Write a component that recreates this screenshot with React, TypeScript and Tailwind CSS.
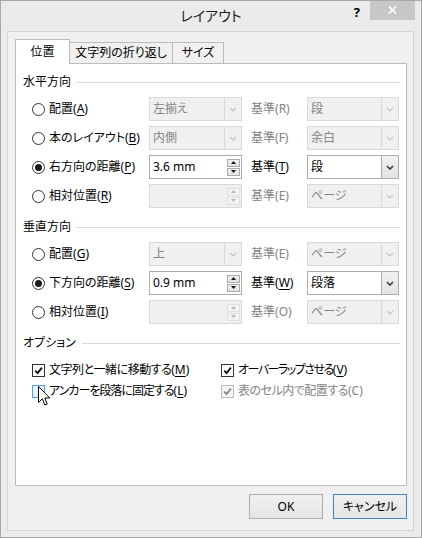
import React from "react"

type Field = { kind: "combo" | "spin"; v: string; on: boolean }
type Row = { label: string; k: string; checked?: boolean; field: Field; base: string; baseOn: boolean; right: string; rightOn: boolean }

const horizontal: Row[] = [
  { label: "配置", k: "A", field: { kind: "combo", v: "左揃え", on: false }, base: "R", baseOn: false, right: "段", rightOn: false },
  { label: "本のレイアウト", k: "B", field: { kind: "combo", v: "内側", on: false }, base: "F", baseOn: false, right: "余白", rightOn: false },
  { label: "右方向の距離", k: "P", checked: true, field: { kind: "spin", v: "3.6 mm", on: true }, base: "T", baseOn: true, right: "段", rightOn: true },
  { label: "相対位置", k: "R", field: { kind: "spin", v: "", on: false }, base: "E", baseOn: false, right: "ページ", rightOn: false },
]

const vertical: Row[] = [
  { label: "配置", k: "G", field: { kind: "combo", v: "上", on: false }, base: "E", baseOn: false, right: "ページ", rightOn: false },
  { label: "下方向の距離", k: "S", checked: true, field: { kind: "spin", v: "0.9 mm", on: true }, base: "W", baseOn: true, right: "段落", rightOn: true },
  { label: "相対位置", k: "I", field: { kind: "spin", v: "", on: false }, base: "O", baseOn: false, right: "ページ", rightOn: false },
]

function Acc({ t, k, off, cls }: { t: string; k: string; off?: boolean; cls?: string }) {
  return (
    <span className="whitespace-nowrap">
      <span className={cls}>{t}</span>(<span className={off ? "" : "underline underline-offset-2"}>{k}</span>)
    </span>
  )
}

function Chevron({ on }: { on: boolean }) {
  return (
    <svg width="8" height="5" viewBox="0 0 8 5">
      <path d="M1 1 L4 4 L7 1" fill="none" stroke={on ? "#3c3c3c" : "#c4c4c4"} strokeWidth={on ? 1.6 : 1.1} />
    </svg>
  )
}

function Combo({ v, on, w }: { v: string; on: boolean; w: string }) {
  return (
    <div className={`${w} h-[24px] flex border ${on ? "border-[#abadb3] bg-white text-black" : "border-[#d9d9d9] bg-[#f0f0f0] text-[#838383]"}`}>
      <span className="flex-1 pl-[3px] flex items-center leading-[16px]">{v}</span>
      <span className={`w-[17px] flex items-center justify-center border-l ${on ? "border-[#acacac] bg-gradient-to-b from-[#f0f0f0] to-[#e3e3e3]" : "border-[#d9d9d9]"}`}>
        <Chevron on={on} />
      </span>
    </div>
  )
}

function SpinBtn({ up, on }: { up?: boolean; on: boolean }) {
  return (
    <span className={`w-[13px] h-[8px] flex items-center justify-center border ${on ? "border-[#acacac] bg-gradient-to-b from-[#f2f2f2] to-[#e2e2e2]" : "border-[#e0e0e0] bg-[#f4f4f4]"}`}>
      <svg width="5" height="3" viewBox="0 0 5 3">
        <path d={up ? "M0 3 L2.5 0 L5 3Z" : "M0 0 L2.5 3 L5 0Z"} fill={on ? "#111" : "#b8b8b8"} />
      </svg>
    </span>
  )
}

function Spin({ v, on }: { v: string; on: boolean }) {
  return (
    <div className={`w-[93px] h-[24px] flex items-center border ${on ? "border-[#abadb3] bg-white" : "border-[#d9d9d9] bg-[#f0f0f0]"}`}>
      <span className="flex-1 pl-[3px] leading-[16px]">{v}</span>
      <span className="flex flex-col gap-[1px] mr-[1px]">
        <SpinBtn up on={on} />
        <SpinBtn on={on} />
      </span>
    </div>
  )
}

function Radio({ checked }: { checked?: boolean }) {
  return (
    <span className="w-[13px] h-[13px] shrink-0 rounded-full border border-[#333] bg-white flex items-center justify-center">
      {checked && <span className="w-[7px] h-[7px] rounded-full bg-[#1a1a1a]" />}
    </span>
  )
}

function Check({ checked, off, hover }: { checked?: boolean; off?: boolean; hover?: boolean }) {
  const box = off ? "border-[#bcbcbc] bg-[#f4f4f4]" : hover ? "border-[#5b9bd5] bg-[#e8f2fc]" : "border-[#333] bg-white"
  return (
    <span className={`w-[13px] h-[13px] shrink-0 border flex items-center justify-center ${box}`}>
      {checked && (
        <svg width="9" height="9" viewBox="0 0 9 9">
          <path d="M1.2 4.6 L3.6 7.1 L7.9 1.6" fill="none" stroke={off ? "#8a8a8a" : "#111"} strokeWidth="1.8" />
        </svg>
      )}
    </span>
  )
}

function Section({ title }: { title: string }) {
  return (
    <div className="h-[14px] flex items-center">
      <span className="leading-[14px]">{title}</span>
      <span className="flex-1 h-px bg-[#dcdcdc] ml-[6px]" />
    </div>
  )
}

function Line({ r }: { r: Row }) {
  return (
    <div className="flex items-center h-[24px] pl-[9px]">
      <div className="w-[117px] flex items-center gap-[4px] leading-[16px]">
        <Radio checked={r.checked} />
        <Acc t={r.label} k={r.k} />
      </div>
      {r.field.kind === "combo" ? <Combo v={r.field.v} on={r.field.on} w="w-[93px]" /> : <Spin v={r.field.v} on={r.field.on} />}
      <div className={`w-[56px] ml-[9px] leading-[16px] ${r.baseOn ? "text-black" : "text-[#838383]"}`}>
        <Acc t="基準" k={r.base} off={!r.baseOn} />
      </div>
      <Combo v={r.right} on={r.rightOn} w="w-[92px]" />
    </div>
  )
}

export default function App() {
  return (
    <div className="relative w-[422px] h-[538px] overflow-hidden border border-[#a8a8a8] bg-[#ebebeb] flex flex-col text-[12px] text-black font-['Noto_Sans','Noto_Sans_CJK_JP',sans-serif] [font-feature-settings:'palt']">
      {/* title bar */}
      <div className="h-[30px] grid grid-cols-[1fr_auto_1fr]">
        <div />
        <div className="text-[14px] leading-[20px] pt-[5px] text-[#1e1e1e]">レイアウト</div>
        <div className="flex justify-end items-start pr-[6px]">
          <span className="mt-[4px] mr-[10px] text-[13px] font-bold leading-[14px]">?</span>
          <span className="w-[45px] h-[20px] -mt-px bg-[#c7c7c7] flex items-center justify-center">
            <svg width="9" height="8" viewBox="0 0 9 8">
              <path d="M1 0.5 L8 7.5 M8 0.5 L1 7.5" stroke="white" strokeWidth="1.6" />
            </svg>
          </span>
        </div>
      </div>

      {/* client area */}
      <div className="ml-[6px] w-[407px] h-[500px] border border-[#d5d5d5] bg-[#f0f0f0] flex flex-col">
        <div className="pt-[7px] pl-[7px] h-[31px] flex items-end">
          <div className="relative z-10 -mb-px w-[55px] h-[25px] bg-white border border-b-0 border-[#bcbcbc] flex items-center justify-center leading-[16px]">位置</div>
          <div className="-ml-px w-[104px] h-[21px] bg-[#f0f0f0] border border-b-0 border-[#bcbcbc] flex items-center justify-center leading-[16px]">文字列の折り返し</div>
          <div className="-ml-px w-[52px] h-[21px] bg-[#f0f0f0] border border-b-0 border-[#bcbcbc] flex items-center justify-center leading-[16px]">サイズ</div>
        </div>

        <div className="ml-[7px] w-[392px] h-[423px] bg-white border border-[#bcbcbc] pl-[7px] pr-[6px] pt-[11px] flex flex-col">
          <Section title="水平方向" />
          <div className="mt-[8px] flex flex-col gap-[5px]">
            {horizontal.map((r, i) => <Line key={i} r={r} />)}
          </div>

          <div className="mt-[12px]"><Section title="垂直方向" /></div>
          <div className="mt-[8px] flex flex-col gap-[5px]">
            {vertical.map((r, i) => <Line key={i} r={r} />)}
          </div>

          <div className="mt-[12px]"><Section title="オプション" /></div>
          <div className="mt-[10px] pl-[9px] flex flex-col gap-[1px] leading-[16px]">
            <div className="h-[20px] flex items-center">
              <div className="w-[189px] flex items-center gap-[4px]">
                <Check checked />
                <Acc t="文字列と一緒に移動する" k="M" cls="tracking-[-0.5px]" />
              </div>
              <div className="flex items-center gap-[4px]">
                <Check checked />
                <Acc t="オーバーラップさせる" k="V" cls="tracking-[-1.5px]" />
              </div>
            </div>
            <div className="h-[20px] flex items-center">
              <div className="w-[189px] flex items-center gap-[4px]">
                <Check hover />
                <Acc t="アンカーを段落に固定する" k="L" cls="tracking-[-1px]" />
              </div>
              <div className="flex items-center gap-[4px] text-[#838383]">
                <Check checked off />
                <Acc t="表のセル内で配置する" k="C" off cls="tracking-[-0.5px]" />
              </div>
            </div>
          </div>
        </div>

        <div className="ml-[7px] w-[392px] mt-[8px] flex justify-end gap-[10px]">
          <button className="w-[74px] h-[25px] border border-[#acacac] bg-gradient-to-b from-[#f0f0f0] to-[#e5e5e5] leading-[16px]">OK</button>
          <button className="w-[74px] h-[25px] border border-[#3f84c7] bg-gradient-to-b from-[#f0f0f0] to-[#e5e5e5] leading-[16px]">キャンセル</button>
        </div>
      </div>

      {/* mouse pointer */}
      <svg className="absolute left-[37px] top-[385px]" width="13" height="21" viewBox="0 0 13 21">
        <path d="M0.5 0.5 L0.5 16.5 L4.3 12.8 L6.8 19 L9.2 18 L6.8 12 L11.8 12 Z" fill="white" stroke="black" strokeWidth="1" strokeLinejoin="round" />
      </svg>
    </div>
  )
}
